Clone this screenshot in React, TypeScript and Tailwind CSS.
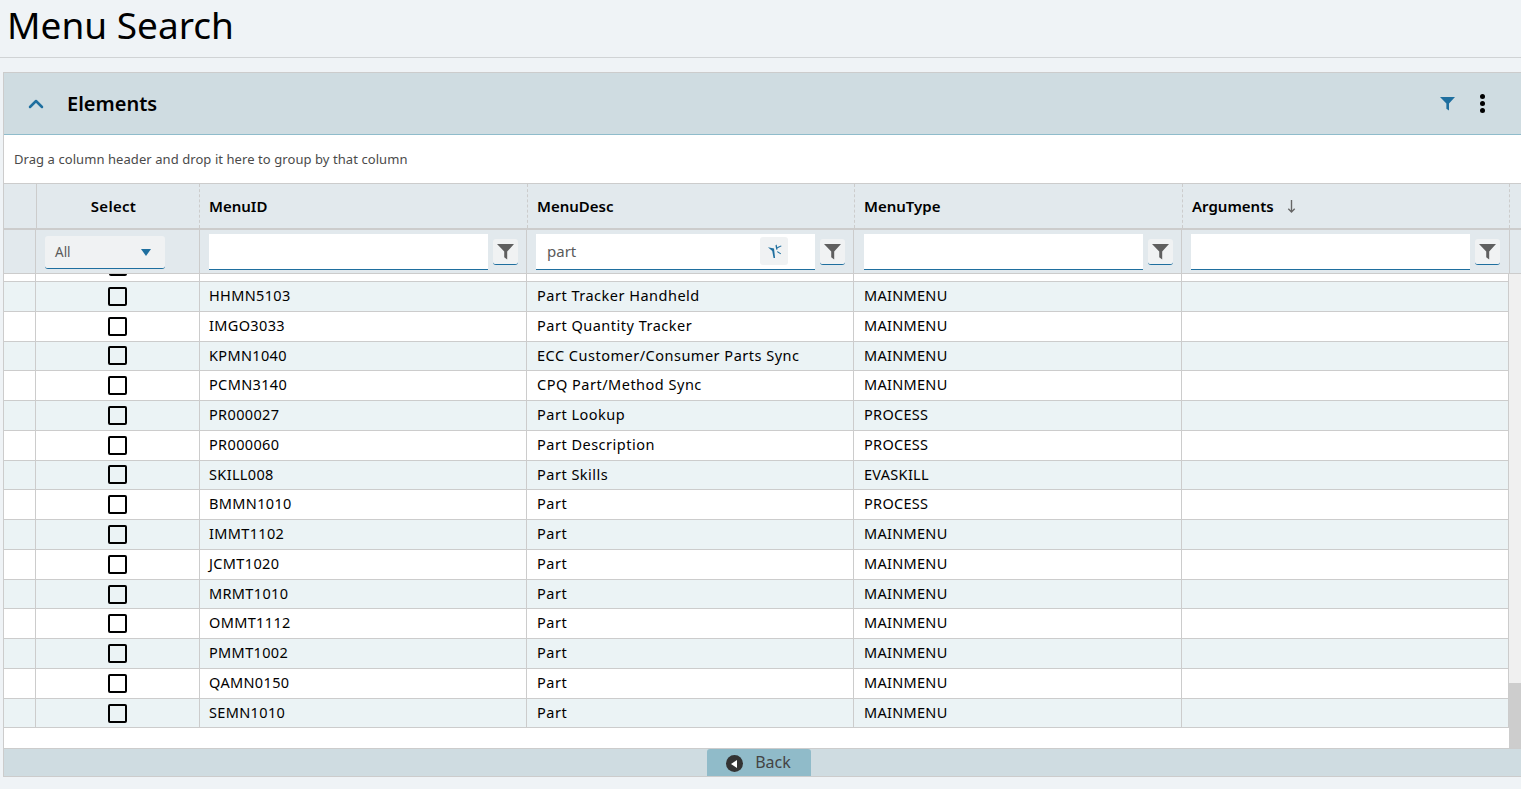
import { ChevronUp } from "lucide-react";

const HEAD_COLS = "grid w-[1506px] grid-cols-[33px_163px_328px_327px_328px_327px]";
const FILTER_COLS = "grid w-[1506px] grid-cols-[32px_164px_327px_327px_328px_328px]";
const BODY_COLS = "grid w-[1505px] grid-cols-[32px_164px_327px_327px_328px_327px]";

const ROWS = [
  ["HHMN5103", "Part Tracker Handheld", "MAINMENU"],
  ["IMGO3033", "Part Quantity Tracker", "MAINMENU"],
  ["KPMN1040", "ECC Customer/Consumer Parts Sync", "MAINMENU"],
  ["PCMN3140", "CPQ Part/Method Sync", "MAINMENU"],
  ["PR000027", "Part Lookup", "PROCESS"],
  ["PR000060", "Part Description", "PROCESS"],
  ["SKILL008", "Part Skills", "EVASKILL"],
  ["BMMN1010", "Part", "PROCESS"],
  ["IMMT1102", "Part", "MAINMENU"],
  ["JCMT1020", "Part", "MAINMENU"],
  ["MRMT1010", "Part", "MAINMENU"],
  ["OMMT1112", "Part", "MAINMENU"],
  ["PMMT1002", "Part", "MAINMENU"],
  ["QAMN0150", "Part", "MAINMENU"],
  ["SEMN1010", "Part", "MAINMENU"],
];

function Funnel({ className }: { className: string }) {
  return (
    <svg viewBox="0 0 16 16" className={className} fill="currentColor">
      <path d="M0 1h16L9.6 8v7.5L6.8 13.5V8z" />
    </svg>
  );
}

function FilterButton() {
  return (
    <button className="flex h-[26px] w-[25px] shrink-0 items-center justify-center rounded-[3px] border-b border-[#1f6f9f] bg-[#f0f2f3] text-[#5f5f5f]">
      <Funnel className="h-[17px] w-[17px]" />
    </button>
  );
}

function FilterInput({ value, inset }: { value?: string; inset?: boolean }) {
  return (
    <div className={`flex items-center gap-[5px] ${inset ? "pl-[10px]" : "pl-[9px]"}`}>
      <div className="flex h-[36px] w-[279px] items-center border-b border-[#1f6f9f] bg-white pl-[11px] pr-[27px] text-[15px] text-[#5a5a5a]">
        <span className="flex-1 pt-[1px]">{value}</span>
        {value && (
          <span className="flex h-[28px] w-[28px] items-center justify-center rounded-[3px] bg-[#f0f2f3] text-[#1f6f9f]">
            <svg viewBox="0 0 16 16" className="h-[15px] w-[15px]" fill="currentColor">
              <path d="M1 3.5l6.5 1.2L8.6 15H7L5.6 7.5z" />
              <path d="M9 1.5l1.2-.9 1.2 5-1.5.6z" />
              <path d="M10.5 3.5L15 1.5l.5 1-4.2 2z" />
              <path d="M11 7.5l4 2.5-.5.9-3.5-2.2z" />
            </svg>
          </span>
        )}
      </div>
      <FilterButton />
    </div>
  );
}

function HeaderCell({ label, arrow }: { label: string; arrow?: boolean }) {
  return (
    <div className="flex items-center gap-[12px] border-r border-dashed border-[#cccccc] pl-[9px] text-[15px] font-semibold text-black">
      {label}
      {arrow && (
        <svg viewBox="0 0 12 16" className="h-[15px] w-[11px] text-[#666666]" fill="none" stroke="currentColor" strokeWidth="1.5">
          <path d="M6 1v13M2.5 10.5L6 14l3.5-3.5" />
        </svg>
      )}
    </div>
  );
}

export default function App() {
  return (
    <div className="flex h-[789px] flex-col overflow-hidden bg-[#eff3f6] font-['Noto_Sans','Liberation_Sans',sans-serif] text-black">
      <div className="h-[58px] shrink-0 border-b border-[#d0d3d5] pl-[7px] text-[37px] leading-[50px]">
        Menu Search
      </div>

      <div className="mt-[14px] ml-[3px] flex h-[705px] flex-col border-l border-t border-[#cccccc]">
        {/* Panel title */}
        <div className="flex h-[62px] shrink-0 items-center border-b border-[#8fbccb] bg-[#cfdce1]">
          <ChevronUp className="ml-[20px] h-[24px] w-[24px] text-[#1f6f9f]" strokeWidth={2.5} />
          <span className="ml-[19px] text-[20px] font-semibold">Elements</span>
          <Funnel className="ml-auto h-[15px] w-[15px] text-[#1f6f9f]" />
          <div className="mr-[36px] ml-[25px] flex flex-col gap-[2px]">
            <span className="h-[5px] w-[5px] rounded-full bg-black" />
            <span className="h-[5px] w-[5px] rounded-full bg-black" />
            <span className="h-[5px] w-[5px] rounded-full bg-black" />
          </div>
        </div>

        <div className="flex h-[48px] shrink-0 items-center bg-white pl-[10px] pt-[1px] text-[13px] tracking-[0.07px] text-[#4a4a4a]">
          Drag a column header and drop it here to group by that column
        </div>

        {/* Column headers */}
        <div className="h-[47px] shrink-0 border-t border-b-2 border-[#cccccc] bg-[#e2e9ed]">
          <div className={`${HEAD_COLS} h-full`}>
            <div className="border-r border-[#cccccc]" />
            <div className="flex items-center justify-center border-r border-dashed border-[#cccccc] pr-[9px] text-[15px] font-semibold tracking-[0.3px]">
              Select
            </div>
            <HeaderCell label="MenuID" />
            <HeaderCell label="MenuDesc" />
            <HeaderCell label="MenuType" />
            <HeaderCell label="Arguments" arrow />
          </div>
        </div>

        {/* Filter row */}
        <div className="h-[44px] shrink-0 border-b border-[#cccccc] bg-[#e2e9ed]">
          <div className={`${FILTER_COLS} h-full`}>
            <div className="border-r border-[#cccccc]" />
            <div className="flex items-center border-r border-[#cccccc] pl-[9px]">
              <div className="mt-[1px] flex h-[33px] w-[120px] items-center justify-between rounded-[3px] border-b border-[#1f6f9f] bg-[#f0f2f3] px-[10px] pt-[1px] text-[13.5px] text-[#5a5a5a]">
                All
                <span className="mr-[4px] h-0 w-0 border-x-[5px] border-t-[7px] border-x-transparent border-t-[#1f6f9f]" />
              </div>
            </div>
            <div className="flex items-center border-r border-[#cccccc]"><FilterInput /></div>
            <div className="flex items-center border-r border-[#cccccc]"><FilterInput value="part" /></div>
            <div className="flex items-center border-r border-[#cccccc]"><FilterInput inset /></div>
            <div className="flex items-center border-r border-[#cccccc]"><FilterInput /></div>
          </div>
        </div>

        {/* Body */}
        <div className="flex min-h-0 flex-1 bg-white">
          <div className="w-[1505px] shrink-0 overflow-hidden">
            <div className={`${BODY_COLS} h-[8px] border-b border-[#cccccc]`}>
              <div className="border-r border-[#cccccc]" />
              <div className="flex justify-center border-r border-[#cccccc]">
                <span className="h-[2px] w-[18px] rounded-b-[2px] bg-black" />
              </div>
              <div className="border-r border-[#cccccc]" />
              <div className="border-r border-[#cccccc]" />
              <div className="border-r border-[#cccccc]" />
              <div className="border-r border-[#cccccc]" />
            </div>
            {ROWS.map(([id, desc, type], i) => (
              <div
                key={id}
                className={`${BODY_COLS} h-[29.77px] border-b border-[#cccccc] text-[14.5px] leading-[26px] ${
                  i % 2 === 0 ? "bg-[#ebf3f5]" : "bg-white"
                }`}
              >
                <div className="border-r border-[#cccccc]" />
                <div className="flex items-center justify-center border-r border-[#cccccc]">
                  <span className="h-[19px] w-[19px] rounded-[2px] border-2 border-black bg-transparent" />
                </div>
                <div className="border-r border-[#cccccc] pl-[9px] tracking-[0.35px]">{id}</div>
                <div className="border-r border-[#cccccc] pl-[10px] tracking-[0.5px]">{desc}</div>
                <div className="border-r border-[#cccccc] pl-[10px] tracking-[0.3px]">{type}</div>
                <div className="border-r border-[#cccccc]" />
              </div>
            ))}
          </div>
          {/* Scrollbar */}
          <div className="flex flex-1 flex-col justify-end bg-[#f0f0f0]">
            <div className="h-[65px] bg-[#cdcdcd]" />
          </div>
        </div>

        {/* Footer */}
        <div className="flex h-[29px] shrink-0 justify-center border-y border-[#cccccc] bg-[#cfdce1]">
          <button className="mr-[8px] flex h-full w-[104px] items-center justify-center gap-[12px] rounded-t-[3px] bg-[#90bbc9] text-[16px] text-[#444444]">
            <span className="mt-[2px] flex h-[17px] w-[17px] items-center justify-center rounded-full bg-[#333333]">
              <span className="mr-[2px] h-0 w-0 border-y-[4px] border-r-[6px] border-y-transparent border-r-white" />
            </span>
            <span className="-mt-[2px]">Back</span>
          </button>
        </div>
      </div>
    </div>
  );
}
